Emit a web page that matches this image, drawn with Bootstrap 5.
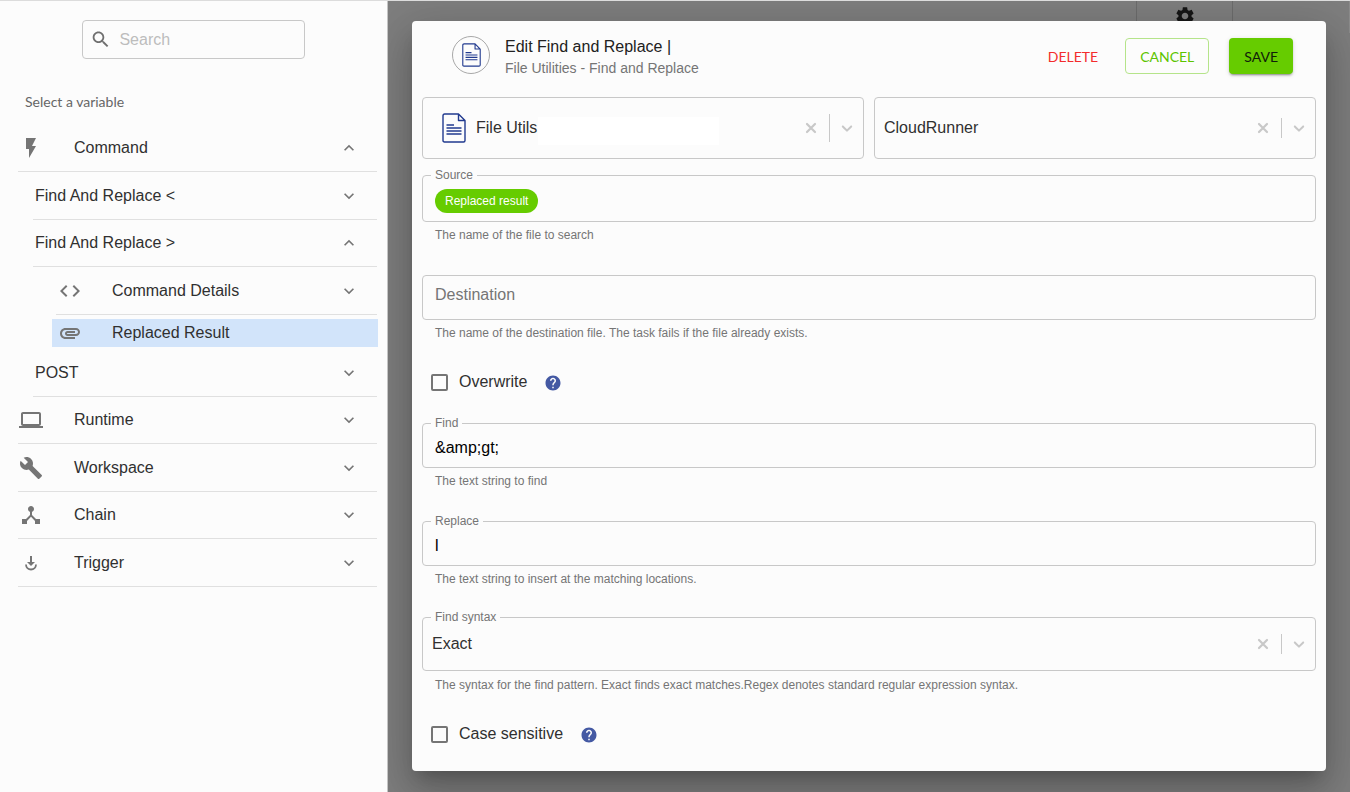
<!DOCTYPE html>
<html lang="en">
<head>
<meta charset="utf-8">
<meta name="viewport" content="width=device-width, initial-scale=1">
<title>Edit Find and Replace</title>
<link href="https://cdn.jsdelivr.net/npm/bootstrap@5.3.0/dist/css/bootstrap.min.css" rel="stylesheet">
<style>
  :root { --paper:#fcfcfc; --line:#c8c8c8; --ink:#303030; --muted:#757575; --brand:#66cc00; }
  body { font-family:"Liberation Sans", Arial, sans-serif; font-size:16px; line-height:24px; color:var(--ink); background:var(--paper); border-top:1px solid #dcdcdc; }
  .lato { font-family:Lato, sans-serif; }

  /* sidebar */
  .side { flex:0 0 388px; border-right:1px solid #c4c4c4; }
  .search-box { width:223px; height:39px; margin:19px 82px 0; padding:0 7px; border:1px solid var(--line); border-radius:4px; gap:8px; }
  .search-box input { border:0; background:none; outline:0; min-width:0; padding:0; }
  .search-box input::placeholder { color:#bdbdbd; }
  .side-title { font-size:14px; line-height:20px; font-weight:400; color:#666; margin:33px 0 13px 25px; }
  .rows4 { display:grid; grid-template-rows:repeat(2, 47px 48px); }
  .tree-row { display:flex; align-items:center; border:0; border-bottom:1px solid #e0e0e0; background:none; color:inherit; text-align:left; padding:0 18px 0 1px; margin:0 10px 0 18px; }
  .tree-row svg { color:var(--muted); flex:none; }
  .tree-row .slot { flex:0 0 55px; display:flex; }
  .tree-row .name { flex:1; }
  .tree-row.lvl2 { margin-left:33px; padding-left:2px; }
  .tree-row.lvl3 { margin-left:56px; padding-left:2px; }
  .tree-row.lvl3 .slot, .tree-row.chosen .slot { flex-basis:54px; }
  .tree-row.chosen { height:28px; margin:4px 9px 2px 52px; padding-left:6px; border:0; background:#d2e4fa; }
  .tree-row.last { height:48px; }

  /* dimmed page behind the dialog */
  .stage { flex:1 1 0; min-width:0; display:grid; background:#7e7e7e; overflow:hidden; }
  .stage > * { grid-area:1 / 1; }
  .behind { height:32px; padding-right:116px; border-right:1px solid #8c8c8c; }
  .behind-tab { width:97px; border:solid #6c6c6c; border-width:0 1px; padding-top:4px; color:#161616; }

  /* dialog */
  .panel { margin:20px 24px; padding:0 10px 16px; background:var(--paper); border-radius:4px; z-index:1; align-self:start;
    box-shadow:0 11px 15px -7px rgba(0,0,0,.2), 0 24px 38px 3px rgba(0,0,0,.14), 0 9px 46px 8px rgba(0,0,0,.12); }
  .panel-head { height:76px; padding:15px 23px 0 30px; }
  .round-icon { width:38px; height:38px; border:1px solid #a8a8a8; border-radius:50%; }
  .panel-head h1 { font-size:16px; line-height:22px; margin:0; font-weight:400; color:#212121; }
  .panel-head p { font-size:14px; line-height:20px; margin:0; color:var(--muted); }
  .titles { margin-left:15px; }
  .acts { padding-top:2px; }
  .act { font-family:Lato, sans-serif; font-size:14px; line-height:21px; height:36px; border-radius:4px; padding:0 14px; border:1px solid transparent; }
  .act-delete { color:#f32c2c; background:none; }
  .act-cancel { color:#5cc400; background:none; border-color:#b5e48a; }
  .act-save { color:#10200a; background:var(--brand); box-shadow:0 3px 1px -2px rgba(0,0,0,.2), 0 2px 2px rgba(0,0,0,.14), 0 1px 5px rgba(0,0,0,.12); }

  .pair { grid-template-columns:1fr 1fr; gap:10px; }
  .outlined { position:relative; display:flex; align-items:center; border:1px solid var(--line); border-radius:4px; height:45px; padding:0 12px; }
  .outlined > label.notch { position:absolute; top:-9px; left:8px; padding:0 4px; background:var(--paper); font-size:12px; line-height:16px; color:var(--muted); }
  .outlined input { flex:1; min-width:0; border:0; background:none; outline:0; padding:0; color:#000; }
  .outlined input::placeholder { color:var(--muted); opacity:1; }
  .outlined select { appearance:none; border:0; background:none; outline:0; padding:0; color:var(--ink); }
  .outlined.with-value { padding-top:5px; }
  .outlined.empty { padding-bottom:5px; }
  .picker { height:62px; padding:0 7px 0 9px; }
  .picker.low { height:54px; }
  .picker .clear { border:0; background:none; padding:0; display:flex; color:#c8c8c8; }
  .picker .tools { gap:8px; color:#c8c8c8; }
  .picker .bar { width:1px; height:20px; background:#c8c8c8; }
  .picker .bar.tall { height:28px; }
  .blank { width:181px; height:28px; background:#fff; margin-top:6px; }
  .chosen-file { padding-left:19px; }
  .chosen-file select { width:62px; margin-left:10px; }
  .source { height:47px; margin-top:16px; padding-top:4px; }
  .chip { height:24px; border-radius:12px; background:var(--brand); color:#fff; font-size:12px; line-height:24px; padding:0 10px; }
  .hint { font-size:12px; line-height:16px; color:var(--muted); margin:5px 0 0 13px; }
  .hint.loose { margin-top:6px; }
  .space-l { margin-bottom:32px; }
  .space-m { margin-bottom:30px; }
  .space-s { margin-bottom:20px; }
  .tick { height:42px; padding-left:9px; }
  .tick input { appearance:none; width:17px; height:17px; margin:0 11px 0 0; border:2px solid #757575; border-radius:2px; }
  .tick input:checked { background:var(--brand); }
  .tick .help { border:0; background:none; padding:0; display:flex; margin:2px 0 0 17px; }
</style>
</head>
<body>
<svg width="0" height="0" class="position-absolute" aria-hidden="true">
  <symbol id="down" viewBox="0 0 24 24"><path fill="currentColor" d="M7.41 8.59 12 13.17l4.59-4.58L18 10l-6 6-6-6z"/></symbol>
  <symbol id="up" viewBox="0 0 24 24"><path fill="currentColor" d="M7.41 15.41 12 10.83l4.59 4.58L18 14l-6-6-6 6z"/></symbol>
  <symbol id="cross" viewBox="0 0 20 20"><path stroke="currentColor" stroke-width="2.200" stroke-linecap="round" d="M6 6l8 8M14 6l-8 8"/></symbol>
  <symbol id="caret" viewBox="0 0 20 20"><path fill="currentColor" d="M4.516 7.548c.436-.446 1.043-.481 1.576 0L10 11.295l3.908-3.747c.533-.481 1.141-.446 1.574 0 .436.445.408 1.197 0 1.615-.406.418-4.695 4.502-4.695 4.502a1.095 1.095 0 0 1-1.576 0S4.924 9.581 4.516 9.163s-.436-1.17 0-1.615z"/></symbol>
  <symbol id="doc" viewBox="0 0 24 30"><path fill="none" stroke="#213a8f" stroke-width="1.4" stroke-linejoin="round" d="M2.7 1h13.8L23 7.500V27.500Q23 29 21.500 29H2.500Q1 29 1 27.500V2.700Q1 1 2.700 1zM16.500 1v6.500H23M4.500 12h7.500M4.500 15h15M4.500 18h15M4.500 21h15"/></symbol>
  <symbol id="help" viewBox="0 0 24 24"><path fill="#4459a3" d="M12 2C6.480 2 2 6.480 2 12s4.480 10 10 10 10-4.480 10-10S17.520 2 12 2zm1 17h-2v-2h2v2zm2.070-7.750-.9.920C13.450 12.900 13 13.500 13 15h-2v-.5c0-1.100.45-2.100 1.170-2.830l1.240-1.260c.37-.36.59-.86.59-1.410 0-1.100-.9-2-2-2s-2 .9-2 2H8c0-2.210 1.790-4 4-4s4 1.790 4 4c0 .88-.36 1.680-.93 2.250z"/></symbol>
</svg>

<div class="d-flex min-vh-100">
  <aside class="side">
    <div class="search-box d-flex align-items-center">
      <svg width="25" height="25" viewBox="0 0 24 24" fill="#6f6f6f"><path d="M15.500 14h-.79l-.28-.27C15.410 12.590 16 11.110 16 9.500 16 5.910 13.090 3 9.500 3S3 5.910 3 9.500 5.910 16 9.500 16c1.610 0 3.090-.59 4.230-1.570l.27.28v.79l5 4.990L20.490 19l-4.990-5zm-6 0C7.010 14 5 11.990 5 9.500S7.010 5 9.500 5 14 7.010 14 9.500 11.990 14 9.500 14z"/></svg>
      <input type="search" placeholder="Search" aria-label="Search">
    </div>
    <h2 class="side-title lato">Select a variable</h2>

    <nav class="d-flex flex-column" aria-label="Variables">
      <div class="rows4">
        <button class="tree-row" aria-expanded="true">
          <span class="slot"><svg width="24" height="24" viewBox="0 0 24 24"><path fill="currentColor" d="M7 2v11h3v9l7-12h-4l4-8z"/></svg></span>
          <span class="name">Command</span><svg width="20" height="20"><use href="#up"/></svg>
        </button>
        <button class="tree-row lvl2" aria-expanded="false"><span class="name">Find And Replace &lt;</span><svg width="20" height="20"><use href="#down"/></svg></button>
        <button class="tree-row lvl2" aria-expanded="true"><span class="name">Find And Replace &gt;</span><svg width="20" height="20"><use href="#up"/></svg></button>
        <button class="tree-row lvl3" aria-expanded="false">
          <span class="slot"><svg width="24" height="24" viewBox="0 0 24 24"><path fill="currentColor" d="M9.400 16.600 4.800 12l4.600-4.600L8 6l-6 6 6 6zm5.200 0 4.600-4.600-4.600-4.600L16 6l6 6-6 6z"/></svg></span>
          <span class="name">Command Details</span><svg width="20" height="20"><use href="#down"/></svg>
        </button>
      </div>
      <button class="tree-row chosen">
        <span class="slot"><svg width="24" height="24" viewBox="0 0 24 24"><path fill="currentColor" d="M2 12.500C2 9.460 4.460 7 7.500 7H18c2.210 0 4 1.790 4 4s-1.790 4-4 4H9.500C8.120 15 7 13.880 7 12.500S8.120 10 9.500 10H17v2H9.410c-.55 0-.55 1 0 1H18c1.100 0 2-.9 2-2s-.9-2-2-2H7.500C5.570 9 4 10.570 4 12.500S5.570 16 7.500 16H17v2H7.500C4.460 18 2 15.540 2 12.500z"/></svg></span>
        <span class="name">Replaced Result</span>
      </button>
      <button class="tree-row lvl2 last" aria-expanded="false"><span class="name">POST</span><svg width="20" height="20"><use href="#down"/></svg></button>
      <div class="rows4">
        <button class="tree-row" aria-expanded="false">
          <span class="slot"><svg width="24" height="24" viewBox="0 0 24 24"><path fill="currentColor" d="M20 18c1.100 0 1.990-.9 1.990-2L22 6c0-1.100-.9-2-2-2H4c-1.100 0-2 .9-2 2v10c0 1.100.9 2 2 2H0v2h24v-2h-4zM4 6h16v10H4V6z"/></svg></span>
          <span class="name">Runtime</span><svg width="20" height="20"><use href="#down"/></svg>
        </button>
        <button class="tree-row" aria-expanded="false">
          <span class="slot"><svg width="24" height="24" viewBox="0 0 24 24"><path fill="currentColor" d="m22.700 19-9.100-9.100c.9-2.300.4-5-1.500-6.900-2-2-5-2.400-7.400-1.300L9 6 6 9 1.600 4.700C.4 7.100.9 10.100 2.900 12.100c1.900 1.900 4.600 2.400 6.900 1.500l9.100 9.100c.4.4 1 .4 1.400 0l2.300-2.300c.5-.4.5-1.100.1-1.400z"/></svg></span>
          <span class="name">Workspace</span><svg width="20" height="20"><use href="#down"/></svg>
        </button>
        <button class="tree-row" aria-expanded="false">
          <span class="slot"><svg width="24" height="24" viewBox="0 0 24 24"><path fill="currentColor" d="m17 16-4-4V8.820C14.160 8.400 15 7.300 15 6c0-1.660-1.340-3-3-3S9 4.340 9 6c0 1.300.84 2.400 2 2.820V12l-4 4H3v5h5v-3.050l4-4.200 4 4.200V21h5v-5h-4z"/></svg></span>
          <span class="name">Chain</span><svg width="20" height="20"><use href="#down"/></svg>
        </button>
        <button class="tree-row" aria-expanded="false">
          <span class="slot"><svg width="24" height="24" viewBox="0 0 24 24"><path fill="currentColor" d="M11 5h2v6h3l-4 4-4-4h3z"/><path fill="none" stroke="currentColor" stroke-width="1.800" d="M7 13.500a5 5 0 0 0 10 0"/></svg></span>
          <span class="name">Trigger</span><svg width="20" height="20"><use href="#down"/></svg>
        </button>
      </div>
    </nav>
  </aside>

  <main class="stage">
    <div class="behind d-flex justify-content-end">
      <div class="behind-tab d-flex justify-content-center">
        <svg width="22" height="22" viewBox="0 0 24 24"><path fill="currentColor" d="M19.140 12.940c.04-.3.06-.61.06-.94 0-.32-.02-.64-.07-.94l2.030-1.580c.18-.14.23-.41.120-.61l-1.920-3.320c-.12-.22-.37-.29-.59-.22l-2.390.96c-.5-.38-1.030-.7-1.620-.94l-.36-2.540c-.04-.24-.24-.41-.48-.41h-3.840c-.24 0-.43.17-.47.41l-.36 2.540c-.59.24-1.130.57-1.620.94l-2.390-.96c-.22-.08-.47 0-.59.22L2.740 8.870c-.12.21-.08.47.12.61l2.030 1.580c-.05.3-.09.63-.09.94s.02.64.07.94l-2.030 1.580c-.18.14-.23.41-.12.61l1.920 3.320c.12.22.37.29.59.22l2.390-.96c.5.38 1.030.7 1.620.94l.36 2.540c.05.24.24.41.48.41h3.840c.24 0 .44-.17.47-.41l.36-2.540c.59-.24 1.130-.56 1.620-.94l2.390.96c.22.08.47 0 .59-.22l1.920-3.320c.12-.22.07-.47-.12-.61l-2.010-1.580zM12 15.600c-1.980 0-3.600-1.620-3.600-3.600s1.620-3.600 3.600-3.600 3.600 1.620 3.600 3.600-1.620 3.600-3.600 3.600z"/></svg>
      </div>
    </div>

    <form class="panel" role="dialog" aria-labelledby="dialog-title">
      <header class="panel-head d-flex align-items-start">
        <span class="round-icon d-flex align-items-center justify-content-center flex-shrink-0"><svg width="19" height="24"><use href="#doc"/></svg></span>
        <div class="titles flex-grow-1">
          <h1 id="dialog-title">Edit Find and Replace |</h1>
          <p>File Utilities - Find and Replace</p>
        </div>
        <div class="acts d-flex">
          <button type="button" class="act act-delete me-2">DELETE</button>
          <button type="button" class="act act-cancel ms-1 me-3">CANCEL</button>
          <button type="submit" class="act act-save ms-1">SAVE</button>
        </div>
      </header>

      <div class="pair d-grid">
        <div class="outlined picker chosen-file">
          <svg width="24" height="30" class="flex-shrink-0"><use href="#doc"/></svg>
          <select aria-label="Utility"><option>File Utils</option></select>
          <span class="blank"></span>
          <div class="tools d-flex align-items-center ms-auto">
            <button type="button" class="clear" aria-label="Clear utility"><svg width="20" height="20"><use href="#cross"/></svg></button>
            <span class="bar tall"></span>
            <svg width="18" height="18"><use href="#caret"/></svg>
          </div>
        </div>
        <div class="outlined picker">
          <select class="flex-grow-1" aria-label="Runner"><option>CloudRunner</option></select>
          <div class="tools d-flex align-items-center">
            <button type="button" class="clear" aria-label="Clear runner"><svg width="20" height="20"><use href="#cross"/></svg></button>
            <span class="bar"></span>
            <svg width="18" height="18"><use href="#caret"/></svg>
          </div>
        </div>
      </div>

      <div class="outlined source">
        <label class="notch" for="source">Source</label>
        <span class="chip">Replaced result</span>
        <input id="source" type="text">
      </div>
      <p class="hint space-l">The name of the file to search</p>

      <div class="outlined empty"><input type="text" placeholder="Destination" aria-label="Destination"></div>
      <p class="hint space-s">The name of the destination file. The task fails if the file already exists.</p>

      <div class="tick d-flex align-items-center space-s">
        <input type="checkbox" id="overwrite"><label for="overwrite">Overwrite</label>
        <button type="button" class="help" aria-label="About overwrite"><svg width="18" height="18"><use href="#help"/></svg></button>
      </div>

      <div class="outlined with-value"><label class="notch" for="find">Find</label><input id="find" type="text" value="&amp;amp;gt;"></div>
      <p class="hint space-l">The text string to find</p>

      <div class="outlined with-value"><label class="notch" for="replace">Replace</label><input id="replace" type="text" value="l"></div>
      <p class="hint space-m">The text string to insert at the matching locations.</p>

      <div class="outlined picker low">
        <label class="notch" for="syntax">Find syntax</label>
        <select id="syntax" class="flex-grow-1"><option>Exact</option><option>Regex</option></select>
        <div class="tools d-flex align-items-center">
          <button type="button" class="clear" aria-label="Clear syntax"><svg width="20" height="20"><use href="#cross"/></svg></button>
          <span class="bar"></span>
          <svg width="18" height="18"><use href="#caret"/></svg>
        </div>
      </div>
      <p class="hint loose space-s">The syntax for the find pattern. Exact finds exact matches.Regex denotes standard regular expression syntax.</p>

      <div class="tick d-flex align-items-center">
        <input type="checkbox" id="case"><label for="case">Case sensitive</label>
        <button type="button" class="help" aria-label="About case sensitivity"><svg width="18" height="18"><use href="#help"/></svg></button>
      </div>
    </form>
  </main>
</div>
<script src="https://cdn.jsdelivr.net/npm/bootstrap@5.3.0/dist/js/bootstrap.bundle.min.js"></script>
</body>
</html>
